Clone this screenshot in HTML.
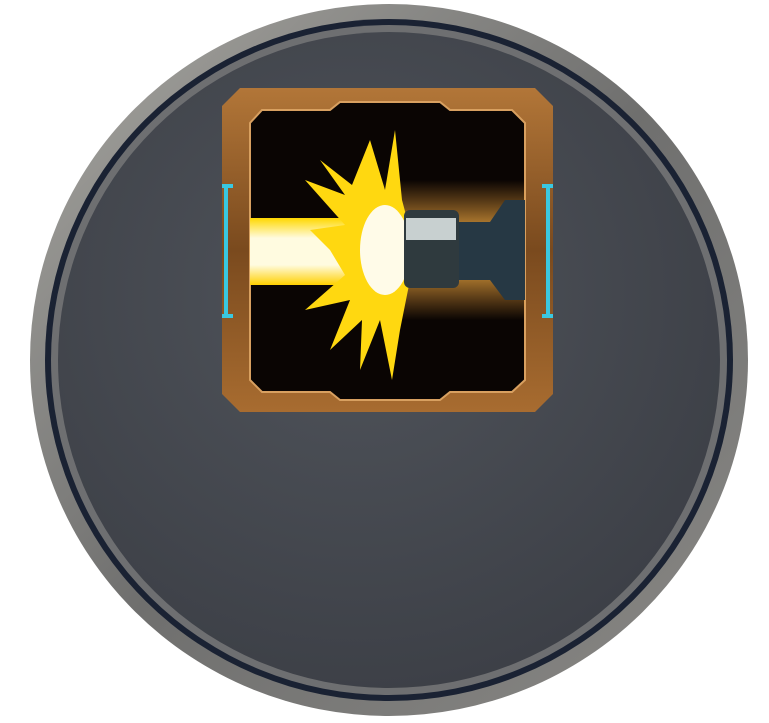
<!DOCTYPE html><html><head><style>body{margin:0;background:#fff;width:769px;height:718px;overflow:hidden}</style></head><body>
<svg width="769" height="718" viewBox="0 0 769 718">
<defs>
<radialGradient id="bg" cx="0.45" cy="0.4" r="0.7"><stop offset="0" stop-color="#50545b"/><stop offset="1" stop-color="#3a3d44"/></radialGradient>
<linearGradient id="rim" x1="0" y1="0" x2="1" y2="1"><stop offset="0" stop-color="#a8a7a2"/><stop offset="0.5" stop-color="#6f6f6e"/><stop offset="1" stop-color="#8a8986"/></linearGradient>
<linearGradient id="br" x1="0" y1="0" x2="0" y2="1"><stop offset="0" stop-color="#b27638"/><stop offset="0.5" stop-color="#7a4a1e"/><stop offset="1" stop-color="#a86c30"/></linearGradient>
<radialGradient id="glow" cx="0.72" cy="0.5" r="0.45" gradientTransform="translate(0.36,0) scale(0.5,1) translate(0,0)"><stop offset="0" stop-color="#e8a040"/><stop offset="0.5" stop-color="#6a3410"/><stop offset="1" stop-color="#0a0503"/></radialGradient>
<linearGradient id="band" x1="0" y1="0" x2="0" y2="1"><stop offset="0" stop-color="#e89838" stop-opacity="0"/><stop offset="0.3" stop-color="#f0a840" stop-opacity="0.8"/><stop offset="0.7" stop-color="#f0a840" stop-opacity="0.8"/><stop offset="1" stop-color="#e89838" stop-opacity="0"/></linearGradient>
<linearGradient id="beam" x1="0" y1="0" x2="0" y2="1"><stop offset="0" stop-color="#ffd800"/><stop offset="0.3" stop-color="#fffbe0"/><stop offset="0.7" stop-color="#fffbe0"/><stop offset="1" stop-color="#ffd000"/></linearGradient>
</defs>
<ellipse cx="389" cy="360" rx="359" ry="356" fill="url(#rim)"/>
<ellipse cx="389" cy="360" rx="344" ry="341" fill="#1a2233"/>
<ellipse cx="389" cy="360" rx="338" ry="335" fill="#6e6f71"/>
<ellipse cx="389" cy="360" rx="331" ry="328" fill="url(#bg)"/>
<path d="M240 88H535L553 106V394L535 412H240L222 394V106Z" fill="url(#br)"/>
<path d="M262 110H330L340 102H440L450 110H512L525 123V380L512 392H450L440 400H340L330 392H262L250 380V123Z" fill="#0a0503" stroke="#d8a060" stroke-width="2"/>
<rect x="380" y="180" width="145" height="140" fill="url(#band)" opacity="0.85"/>
<rect x="250" y="218" width="140" height="67" fill="url(#beam)"/>
<path d="M370 140L385 190L395 130L402 200L410 230L410 280L400 330L392 380L380 320L360 370L362 320L330 350L350 300L305 310L345 275L330 250L310 230L345 225L305 180L345 195L320 160L352 185Z" fill="#ffd810"/>
<ellipse cx="385" cy="250" rx="25" ry="45" fill="#fffbe8"/>
<rect x="404" y="210" width="55" height="78" rx="6" fill="#2f3a3e"/>
<rect x="406" y="218" width="50" height="22" fill="#c8d0d0"/>
<path d="M459 222H490L505 200H525V300H505L490 280H459Z" fill="#263844"/>
<path d="M233 186H222M226 186V316M222 316H233M542 186H553M548 186V316M542 316H553" stroke="#3ac8e0" stroke-width="4" fill="none"/>
</svg>
</body></html>
